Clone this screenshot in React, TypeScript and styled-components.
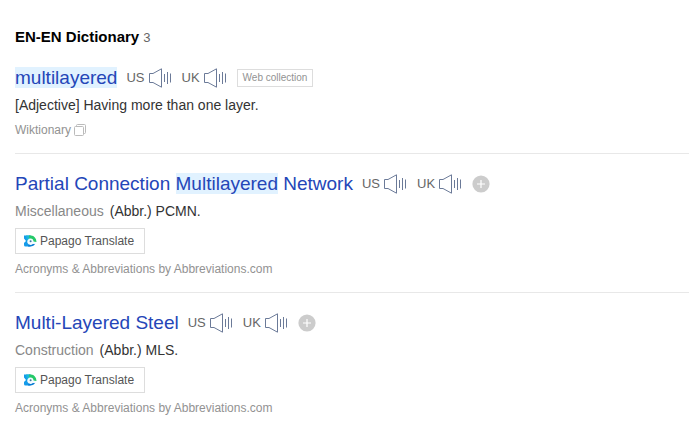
import React from "react";
import styled, { createGlobalStyle } from "styled-components";

const GlobalStyle = createGlobalStyle`
  * { box-sizing: border-box; }
  body {
    margin: 0;
    background: #fff;
    color: #333;
    font-family: "Liberation Sans", Arial, sans-serif;
    font-size: 14px;
  }
  button { font-family: inherit; cursor: pointer; }
`;

const Page = styled.main`
  padding: 26px 0 20px 15px;
`;

const Heading = styled.h2`
  display: flex;
  align-items: baseline;
  gap: 4px;
  margin: 0 0 14px;
  font-size: 15px;
  line-height: 22px;
  color: #000;
`;

const Count = styled.span`
  font-size: 13px;
  font-weight: 400;
  color: #666;
`;

const Entry = styled.article`
  & + & {
    margin-top: 14px;
    padding-top: 15px;
    border-top: 1px solid #e8e8e8;
  }
`;

const TitleRow = styled.div`
  display: flex;
  align-items: center;
  height: 30px;
`;

const Word = styled.a`
  margin-right: 9px;
  font-size: 19px;
  line-height: 30px;
  color: #2446b8;
  text-decoration: none;
  white-space: nowrap;
`;

const Mark = styled.mark`
  background: #e1f2ff;
  color: inherit;
`;

const Pronounce = styled.button`
  display: flex;
  align-items: center;
  gap: 4px;
  margin: 0 10px 0 0;
  padding: 0;
  border: 0;
  background: none;
  font-size: 13px;
  line-height: 20px;
  color: #666;
`;

const Tag = styled.span`
  padding: 0 5px;
  border: 1px solid #ddd;
  font-size: 10px;
  line-height: 16px;
  color: #929292;
`;

const AddButton = styled.button`
  display: flex;
  padding: 0;
  border: 0;
  background: none;
`;

const Meaning = styled.p`
  display: flex;
  gap: 6px;
  margin: 1px 0 0;
  font-size: 14px;
  line-height: 22px;
`;

const Field = styled.span`
  color: #888;
`;

const Translate = styled.button`
  display: flex;
  align-items: center;
  gap: 3px;
  height: 26px;
  margin: 6px 0 0;
  padding: 0 10px 0 8px;
  border: 1px solid #ddd;
  background: #fff;
  font-size: 12px;
  color: #555;
`;

const Source = styled.a`
  display: flex;
  align-items: center;
  gap: 3px;
  width: fit-content;
  margin-top: 5px;
  font-size: 12px;
  line-height: 18px;
  color: #929292;
  text-decoration: none;

  ${Translate} + & {
    margin-top: 6px;
  }
`;

const SpeakerIcon = () => (
  <svg width="23" height="20" viewBox="0 0 23 20" fill="none" stroke="#6b7a98" aria-hidden="true">
    <path d="M.5 5.5H4L12.5 .8v18.4L4 14.5H.5z" />
    <path d="M15.5 6v8M18.5 4v12M21.5 5.5v9" />
  </svg>
);

const PlusIcon = () => (
  <svg width="18" height="18" viewBox="0 0 18 18" aria-hidden="true">
    <circle cx="9" cy="9" r="8.6" fill="#ccc" />
    <path d="M9 5v8M5 9h8" stroke="#fff" strokeWidth="1.2" />
  </svg>
);

const PapagoIcon = () => (
  <svg width="13" height="12" viewBox="0 0 13 12" aria-hidden="true">
    <path d="M0 .5h6.5v11H1.500q-1.500 0-1.500-1.500v-2L2 6 0 3.500z" fill="#149bea" />
    <path d="M2 .5h4.500v4L3 6z" fill="#18b8d8" />
    <path d="M5 .5h2Q12 1 12.500 7H8L5.500 4z" fill="#25c968" />
    <path d="M5 8.500l6 .3Q10 11.500 6 11.500H4z" fill="#087bd4" />
    <path d="M6.500 3.500a3.200 3.200 0 1 0 2.300 5.400L12 8.800 12.300 7 9.500 6.500A3.200 3.200 0 0 0 6.500 3.500z" fill="#f4fcff" />
    <circle cx="6.600" cy="6.200" r="1" fill="#3c78a8" />
  </svg>
);

const WindowsIcon = () => (
  <svg width="13" height="13" viewBox="0 0 13 13" fill="none" stroke="#bbb" aria-hidden="true">
    <rect x=".5" y="2.5" width="9" height="9" rx="1" />
    <path d="M2.5 2.5v-1q0-1 1-1h7q1 0 1 1v7q0 1-1 1h-1" />
  </svg>
);

const Pronunciations = () => (
  <>
    {["US", "UK"].map((accent) => (
      <Pronounce key={accent} type="button">
        {accent}
        <SpeakerIcon />
      </Pronounce>
    ))}
  </>
);

type AbbreviationProps = { title: React.ReactNode; field: string; meaning: string };

const Abbreviation = ({ title, field, meaning }: AbbreviationProps) => (
  <Entry>
    <TitleRow>
      <Word href="#">{title}</Word>
      <Pronunciations />
      <AddButton type="button" aria-label="Add to wordbook">
        <PlusIcon />
      </AddButton>
    </TitleRow>
    <Meaning>
      <Field>{field}</Field>
      {meaning}
    </Meaning>
    <Translate type="button">
      <PapagoIcon />
      Papago Translate
    </Translate>
    <Source href="#">Acronyms &amp; Abbreviations by Abbreviations.com</Source>
  </Entry>
);

export default function App() {
  return (
    <>
      <GlobalStyle />
      <Page>
        <Heading>
          EN-EN Dictionary <Count>3</Count>
        </Heading>
        <Entry>
          <TitleRow>
            <Word href="#">
              <Mark>multilayered</Mark>
            </Word>
            <Pronunciations />
            <Tag>Web collection</Tag>
          </TitleRow>
          <Meaning>[Adjective] Having more than one layer.</Meaning>
          <Source href="#">
            Wiktionary
            <WindowsIcon />
          </Source>
        </Entry>
        <Abbreviation
          title={
            <>
              Partial Connection <Mark>Multilayered</Mark> Network
            </>
          }
          field="Miscellaneous"
          meaning="(Abbr.) PCMN."
        />
        <Abbreviation title="Multi-Layered Steel" field="Construction" meaning="(Abbr.) MLS." />
      </Page>
    </>
  );
}
